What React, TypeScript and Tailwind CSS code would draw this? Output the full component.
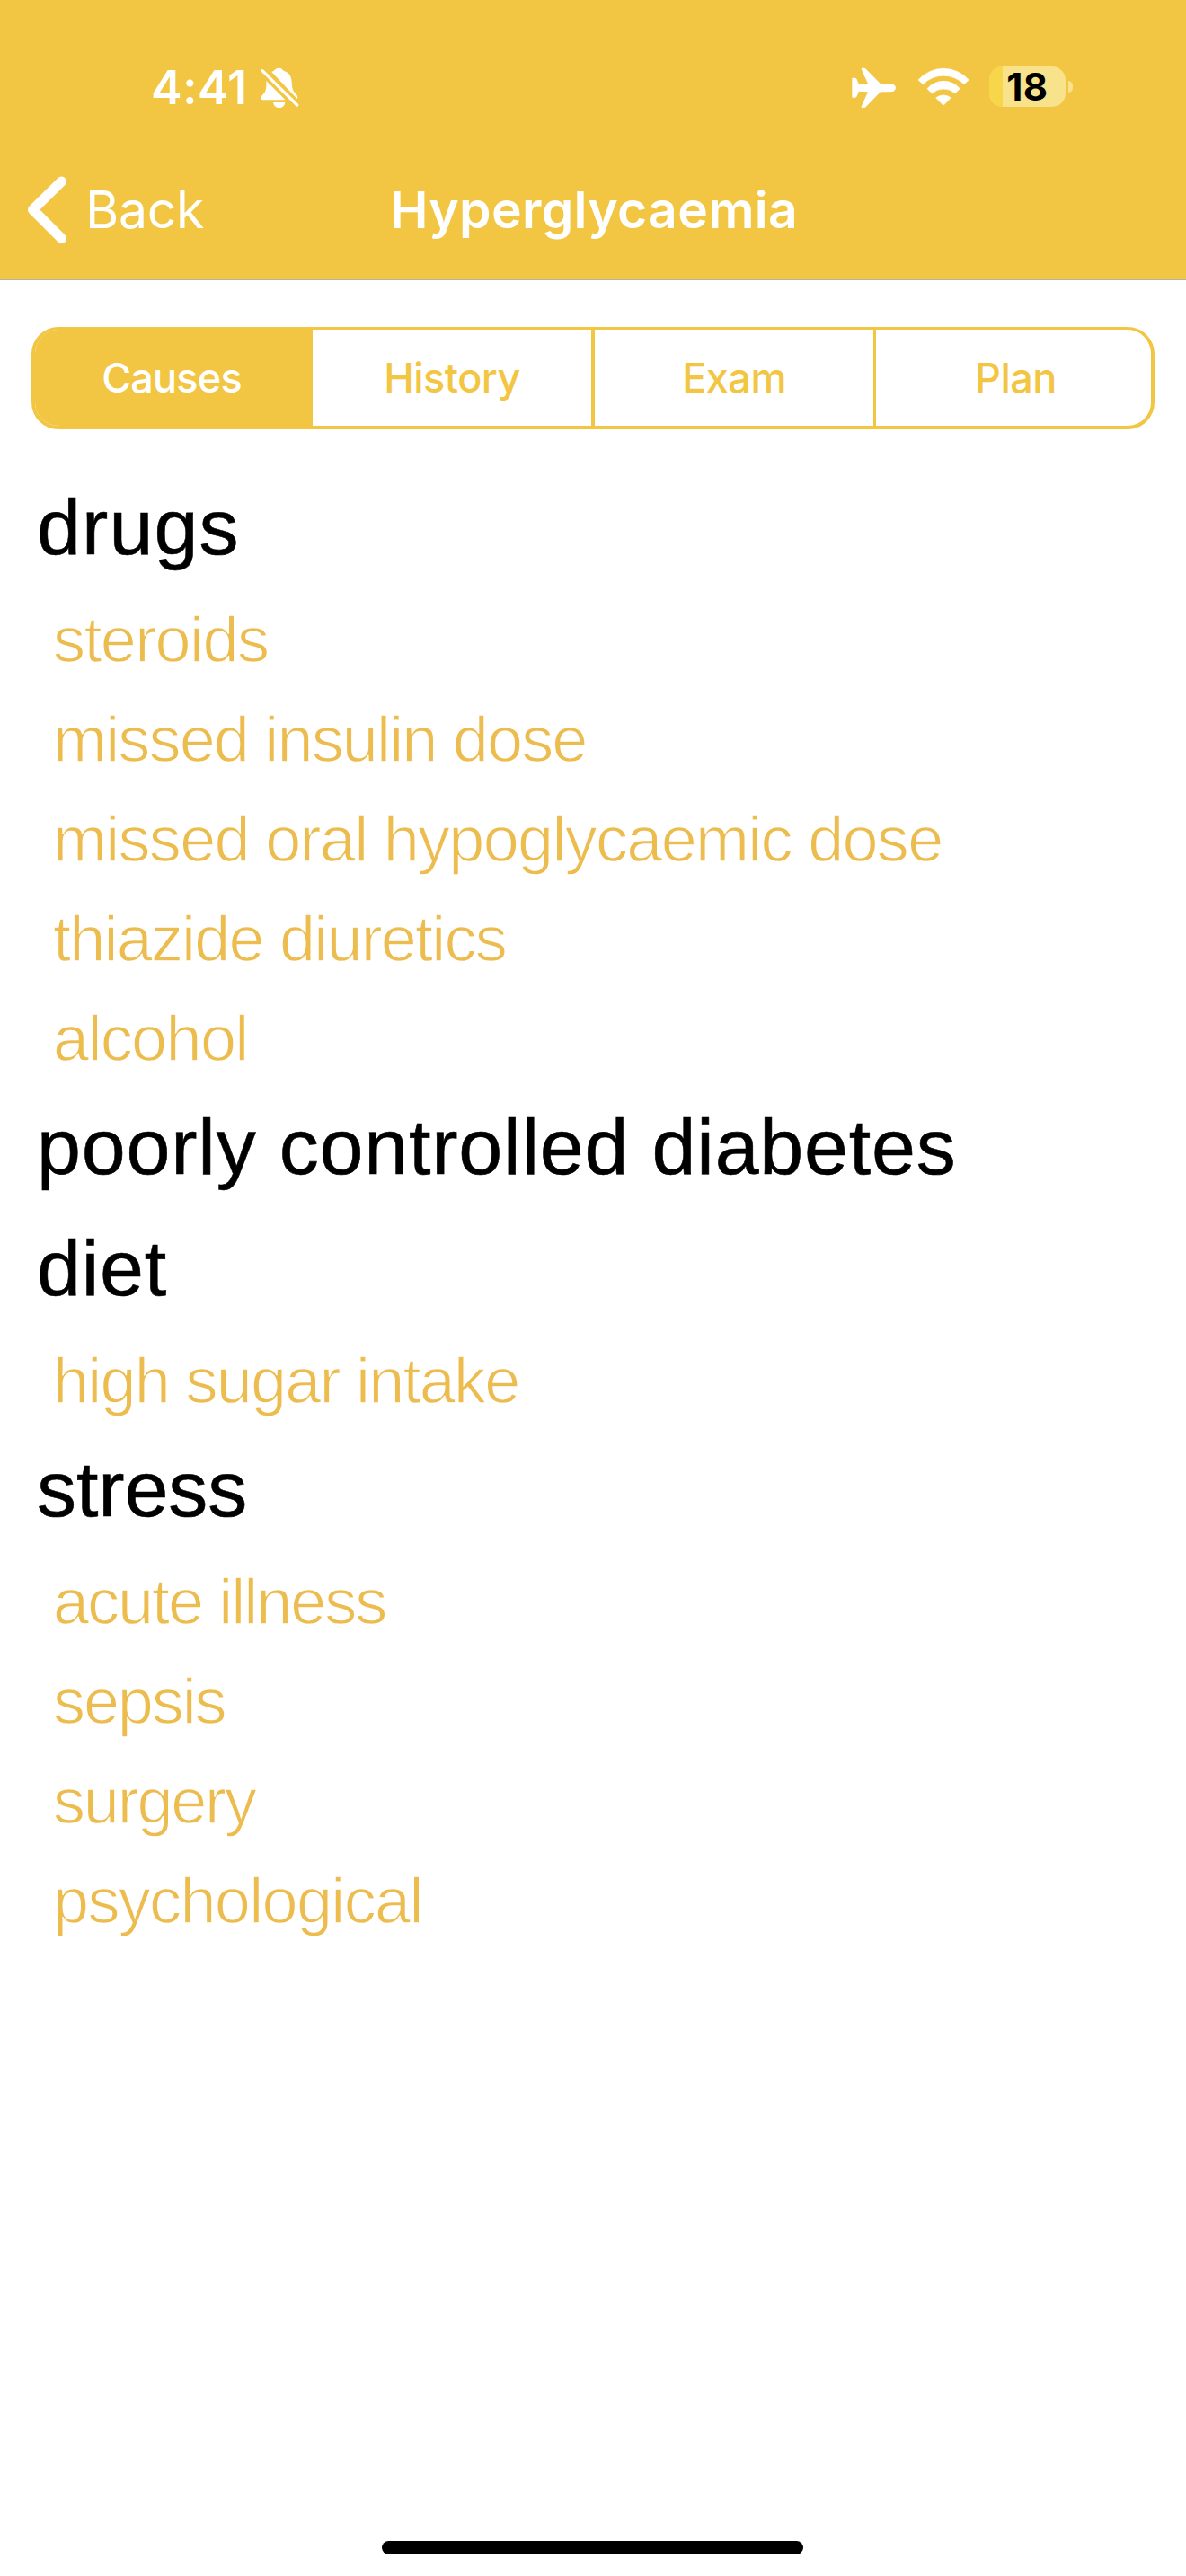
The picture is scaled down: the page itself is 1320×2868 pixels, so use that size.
import React from 'react';

type Item = { text: string; tracking: string };
type Cause = { title: string; tracking: string; items: Item[] };

const causes: Cause[] = [
  {
    title: 'drugs',
    tracking: 'tracking-[1.1px]',
    items: [
      { text: 'steroids', tracking: 'tracking-[-1.6px]' },
      { text: 'missed insulin dose', tracking: 'tracking-[-1.83px]' },
      { text: 'missed oral hypoglycaemic dose', tracking: 'tracking-[-1.7px]' },
      { text: 'thiazide diuretics', tracking: 'tracking-[-1.8px]' },
      { text: 'alcohol', tracking: 'tracking-[-1.65px]' },
    ],
  },
  { title: 'poorly controlled diabetes', tracking: 'tracking-[0.8px]', items: [] },
  {
    title: 'diet',
    tracking: 'tracking-[0.8px]',
    items: [{ text: 'high sugar intake', tracking: 'tracking-[-1.75px]' }],
  },
  {
    title: 'stress',
    tracking: 'tracking-[-0.1px]',
    items: [
      { text: 'acute illness', tracking: 'tracking-[-2px]' },
      { text: 'sepsis', tracking: 'tracking-[-2.1px]' },
      { text: 'surgery', tracking: 'tracking-[-2.2px]' },
      { text: 'psychological', tracking: 'tracking-[-1.65px]' },
    ],
  },
];

function BellSlashIcon() {
  return (
    <svg className="h-[46px] w-[43px]" viewBox="29 31 129 138" fill="white">
      <path d="M66 46Q74 43 76 39Q82 33 90 33Q101 33 105 42C122 46 132 58 133 80C134 105 137 110 150 123Q155 129 151 137Z" />
      <path d="M48 76L112 140H36Q30 140 30 133Q32 125 40 118Q48 110 48 92Z" />
      <path d="M71 148H111Q108 166 91 166Q74 166 71 148Z" />
      <path d="M42 34L158 150" stroke="#f2c643" strokeWidth="9" />
      <path d="M35 42L151 157" stroke="white" strokeWidth="10" strokeLinecap="round" />
    </svg>
  );
}

function AirplaneIcon() {
  return (
    <svg className="h-[46px] w-[50px]" viewBox="50 46 150 138" fill="white">
      <path d="M197 114.500Q195 101 178 101H146L98 52Q95 48 90 48H83L82 52L104 101L74 103L66 84Q64 81 60 81H51V147H60Q64 147 66 144L74 126L104 128L82 177L83 181H90Q95 181 98 177L146 128H178Q195 128 197 114.500Z" />
    </svg>
  );
}

function WifiIcon() {
  return (
    <svg className="h-[43px] w-[58px]" viewBox="268 43 174 129" fill="white" stroke="white" strokeWidth="2" strokeLinejoin="round">
      <path d="M271 85A113 113 0 0 1 440 85L424 99A97 97 0 0 0 287 99Z" />
      <path d="M301 114A72 72 0 0 1 410 114L394 130A57 57 0 0 0 317 130Z" />
      <path d="M330 145A39 39 0 0 1 380 145L355 170Z" />
    </svg>
  );
}

function Battery() {
  return (
    <div className="mb-[3px] flex items-center gap-[3px]">
      <div className="relative flex h-[45px] w-[85px] items-center justify-center rounded-[15px] bg-[#f8e28b]">
        <div className="absolute inset-y-0 left-0 w-[15px] rounded-l-[15px] bg-[#f7d64a]" />
        <span className="relative text-[42px] leading-[45px] font-bold tracking-[0.5px] text-black">18</span>
      </div>
      <div className="h-[13px] w-[5px] rounded-r-full bg-[#f8e28b]" />
    </div>
  );
}

function StatusBar() {
  return (
    <div className="flex h-[196px] items-center justify-between pr-[126px] pl-[168px]">
      <div className="flex items-center gap-[15px]">
        <span className="text-[52px] leading-none font-semibold tracking-[0.3px]">4:41</span>
        <BellSlashIcon />
      </div>
      <div className="flex items-center">
        <AirplaneIcon />
        <div className="mb-[3px] ml-[23px]">
          <WifiIcon />
        </div>
        <div className="ml-[22px]">
          <Battery />
        </div>
      </div>
    </div>
  );
}

function NavBar() {
  return (
    <div className="grid h-[75px] grid-cols-[1fr_auto_1fr] items-center">
      <button className="flex items-center pl-[30px]">
        <svg className="h-[75px] w-[45px]" viewBox="0 0 45 75" fill="none" stroke="white" strokeWidth="11" strokeLinecap="round" strokeLinejoin="round">
          <path d="M38.500 6L6.500 37.500L38.500 69.500" />
        </svg>
        <span className="ml-[20px] text-[57px] leading-none tracking-[-0.3px]">Back</span>
      </button>
      <h1 className="pl-[2px] text-[57px] leading-none font-semibold tracking-[0.3px]">Hyperglycaemia</h1>
      <span />
    </div>
  );
}

function Tabs() {
  return (
    <div className="mx-[35px] mt-[52px] flex h-[114px] overflow-hidden rounded-[30px] border-x-4 border-t-[3.500px] border-b-4 border-[#f2c643] font-['Inter'] text-[45px] leading-none font-medium tracking-[-0.5px] text-[#f2c643]">
      <button className="w-[309px] bg-[#f2c643] pr-[5px] tracking-[-0.8px] text-white">Causes</button>
      <button className="w-[314px] border-r-4 border-[#f2c643]">History</button>
      <button className="w-[313px] border-r-3 border-[#f2c643]">Exam</button>
      <button className="flex-1 pl-[5px]">Plan</button>
    </div>
  );
}

export default function App() {
  return (
    <div className="flex h-[2868px] w-[1320px] flex-col bg-white font-['Liberation_Sans',sans-serif]">
      <header className="h-[312px] border-b border-[#b2b2ac] bg-[#f2c643] font-['Inter'] text-white">
        <StatusBar />
        <NavBar />
      </header>
      <Tabs />
      <main className="mt-[42px] flex-1">
        {causes.map((cause) => (
          <section key={cause.title}>
            <h2 className={`pt-[1px] pb-[3px] pl-[41px] text-[88px] leading-[131px] text-black [-webkit-text-stroke:0.6px_black] ${cause.tracking}`}>{cause.title}</h2>
            <ul>
              {cause.items.map((item) => (
                <li
                  key={item.text}
                  className={`pt-[4px] pl-[59px] text-[72px] leading-[107px] text-[#ecbc4f] [-webkit-text-stroke:1.3px_white] ${item.tracking}`}
                >
                  {item.text}
                </li>
              ))}
            </ul>
          </section>
        ))}
      </main>
      <div className="mb-[24px] ml-[425px] h-[15px] w-[469px] rounded-full bg-black" />
    </div>
  );
}
